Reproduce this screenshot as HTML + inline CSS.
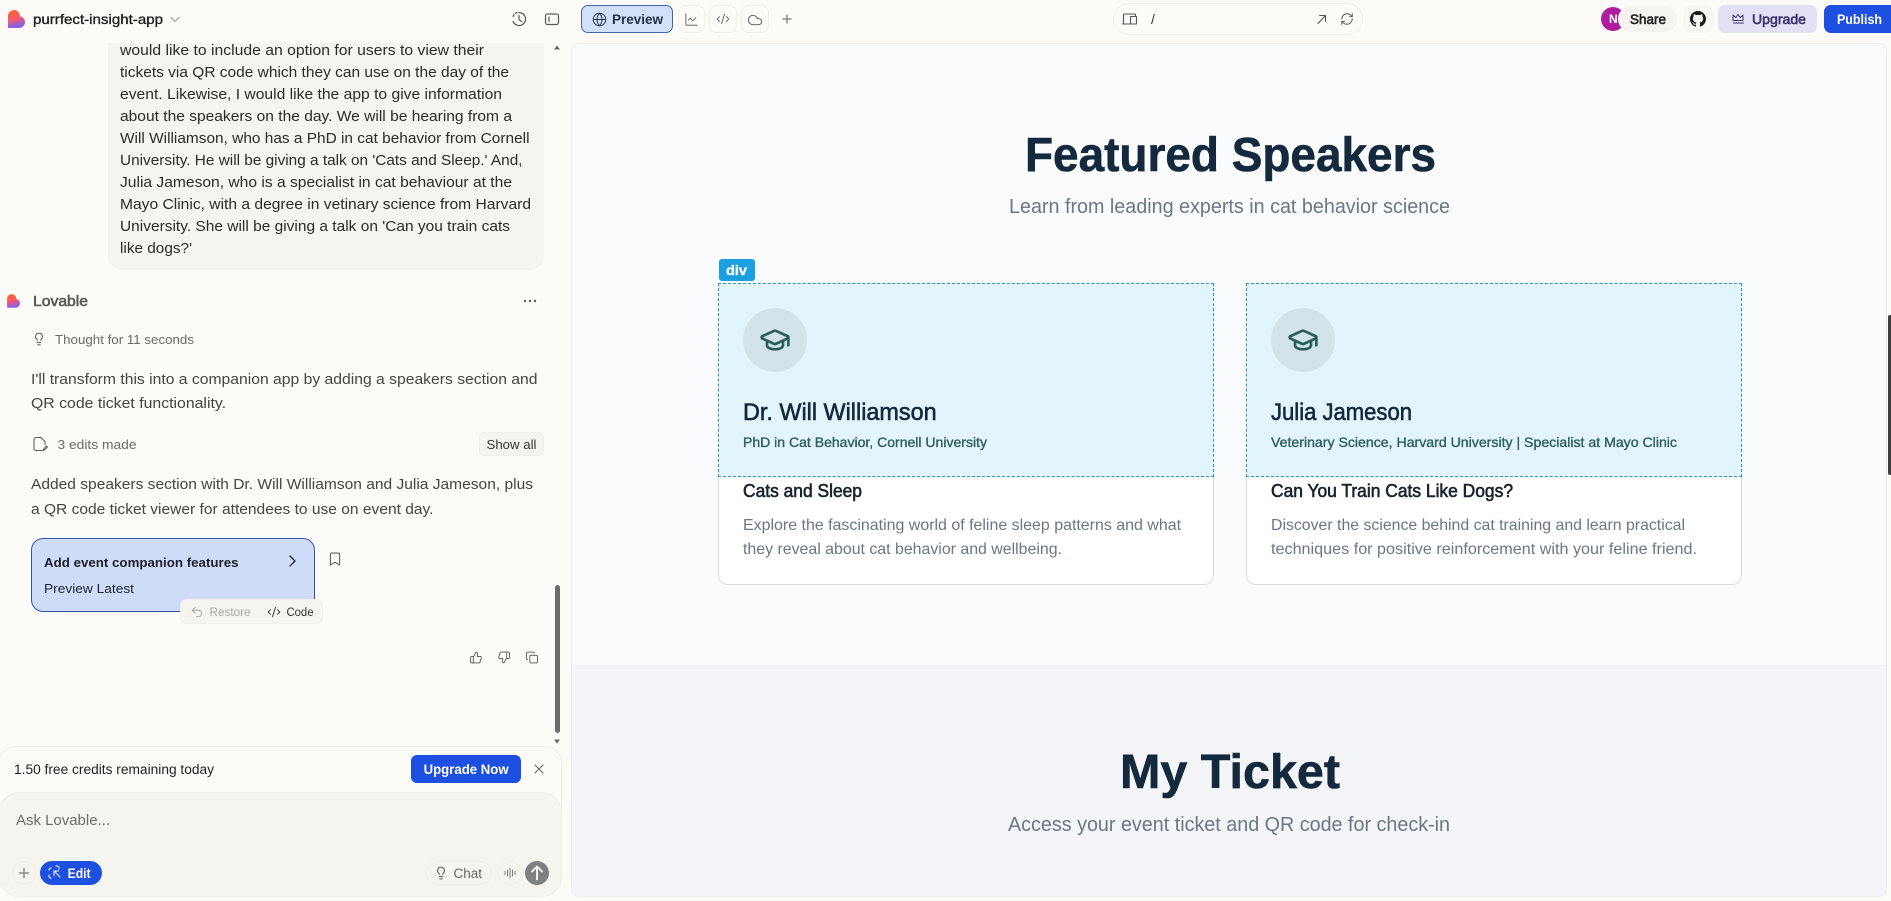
<!DOCTYPE html>
<html lang="en">
<head>
<meta charset="utf-8">
<title>purrfect-insight-app – Lovable</title>
<style>
html,body{margin:0;padding:0;width:1891px;height:901px;overflow:hidden;background:#fcfbf8;font-family:"Liberation Sans",sans-serif}
.b{position:absolute;box-sizing:border-box}
svg.o{position:absolute;left:0;top:0;width:1891px;height:901px}
svg.o text{font-family:"Liberation Sans",sans-serif}
.m{stroke-width:.35px;stroke:currentColor}
.h{stroke-width:.6px;stroke:currentColor}
.s{fill:none;stroke:currentColor;stroke-linecap:round;stroke-linejoin:round}
</style>
</head>
<body>
<!-- chat panel -->
<div class="b" style="left:108px;top:43px;width:436px;height:227px;background:#f6f4ef;border-radius:0 0 14px 14px"></div>
<div class="b" style="left:479px;top:432px;width:65px;height:24px;background:#f6f4ef;border:1px solid #eeede8;border-radius:6px"></div>
<div class="b" style="left:31px;top:538px;width:284px;height:74px;background:#cfdcf8;border:1.5px solid #2f56a8;border-radius:12px"></div>
<div class="b" style="left:180px;top:599px;width:143px;height:25px;background:#f6f4ef;border:1px solid #f0efea;border-radius:7px"></div>
<div class="b" style="left:555px;top:585px;width:5px;height:148px;background:#6b6b6b;border-radius:3px"></div>
<div class="b" style="left:-1px;top:746px;width:563px;height:70px;background:#fcfbf8;border:1px solid #efeee9;border-radius:16px 16px 0 0"></div>
<div class="b" style="left:411px;top:755px;width:110px;height:28px;background:#1d4fe0;border-radius:6px"></div>
<div class="b" style="left:-1px;top:792px;width:563px;height:105px;background:#f6f4ef;border:1px solid #efeee9;border-radius:20px"></div>
<div class="b" style="left:12px;top:861px;width:24px;height:24px;border:1px solid #efeee9;border-radius:50%"></div>
<div class="b" style="left:40px;top:861px;width:62px;height:24px;background:#1d4fe0;border-radius:12px"></div>
<div class="b" style="left:426px;top:861px;width:66px;height:24px;border:1px solid #efeee9;border-radius:12px"></div>
<div class="b" style="left:498px;top:861px;width:24px;height:24px;border:1px solid #efeee9;border-radius:50%"></div>
<div class="b" style="left:525px;top:861px;width:24px;height:24px;background:#808080;border-radius:50%"></div>

<!-- top bar -->
<div class="b" style="left:581px;top:5px;width:92px;height:28px;background:#d2e0f7;border:1px solid #3f68ae;border-radius:7px"></div>
<div class="b" style="left:678px;top:5px;width:27px;height:28px;border:1px solid #f0efea;border-radius:8px"></div>
<div class="b" style="left:709px;top:5px;width:28px;height:28px;border:1px solid #f0efea;border-radius:8px"></div>
<div class="b" style="left:741px;top:5px;width:28px;height:28px;border:1px solid #f0efea;border-radius:8px"></div>
<div class="b" style="left:1113px;top:3px;width:250px;height:32px;border:1px solid #f0efea;border-radius:16px"></div>
<div class="b" style="left:1601px;top:7px;width:24px;height:24px;background:#b01ca0;border-radius:50%;color:#fff;font-size:12px;font-weight:bold;line-height:25px;padding-left:8px">N</div>
<div class="b" style="left:1618px;top:6px;width:59px;height:26px;background:#f6f4ef;border-radius:13px"></div>
<div class="b" style="left:1683px;top:5px;width:30px;height:28px;background:#f8f6f1;border-radius:8px"></div>
<div class="b" style="left:1718px;top:5px;width:99px;height:28px;background:#e2e0f5;border-radius:7px"></div>
<div class="b" style="left:1824px;top:5px;width:67px;height:28px;background:#1d4fe0;border-radius:7px 0 0 7px"></div>

<!-- preview pane -->
<div class="b" style="left:571px;top:43px;width:1316px;height:854px;background:#fafbfd;border:1px solid #eeeeec;border-radius:8px;overflow:hidden">
  <div class="b" style="left:0;top:621px;width:1315px;height:233px;background:#f3f5f8"></div>
</div>
<div class="b" style="left:718px;top:283px;width:496px;height:302px;background:#fff;border:1px solid #d9dce1;border-radius:10px"></div>
<div class="b" style="left:1246px;top:283px;width:496px;height:302px;background:#fff;border:1px solid #d9dce1;border-radius:10px"></div>
<div class="b" style="left:718px;top:283px;width:496px;height:194px;background:#e2f5fd;border:1px dashed #3a93ad"></div>
<div class="b" style="left:1246px;top:283px;width:496px;height:194px;background:#e2f5fd;border:1px dashed #3a93ad"></div>
<div class="b" style="left:743px;top:308px;width:64px;height:64px;background:#d2e4ea;border-radius:50%"></div>
<div class="b" style="left:1271px;top:308px;width:64px;height:64px;background:#d2e4ea;border-radius:50%"></div>
<div class="b" style="left:719px;top:259px;width:36px;height:22px;background:#1a9fe0;border-radius:3px"></div>
<div class="b" style="left:1888px;top:315px;width:3px;height:160px;background:#3f3f3f;border-radius:2px 0 0 2px"></div>

<svg class="o" viewBox="0 0 1891 901">
<defs>
<linearGradient id="lg" x1="0" y1="0" x2="0.25" y2="1"><stop offset="0" stop-color="#ff6a1f"/><stop offset=".55" stop-color="#f8566b"/><stop offset="1" stop-color="#8263ee"/></linearGradient>
<symbol id="cap" viewBox="0 0 24 24"><path d="M21.42 10.922a1 1 0 0 0-.019-1.838L12.83 5.18a2 2 0 0 0-1.66 0L2.6 9.08a1 1 0 0 0 0 1.832l8.57 3.908a2 2 0 0 0 1.66 0z"/><path d="M22 10v6"/><path d="M6 12.5V16a6 3 0 0 0 12 0v-3.5"/></symbol>
<symbol id="up" viewBox="0 0 24 24"><path d="M7 10v12"/><path d="M15 5.88 14 10h5.83a2 2 0 0 1 1.92 2.56l-2.33 8A2 2 0 0 1 17.5 22H4a2 2 0 0 1-2-2v-8a2 2 0 0 1 2-2h2.76a2 2 0 0 0 1.79-1.11L12 2a3.13 3.13 0 0 1 3 3.88Z"/></symbol>
<symbol id="down" viewBox="0 0 24 24"><path d="M17 14V2"/><path d="M9 18.12 10 14H4.17a2 2 0 0 1-1.92-2.56l2.33-8A2 2 0 0 1 6.5 2H20a2 2 0 0 1 2 2v8a2 2 0 0 1-2 2h-2.76a2 2 0 0 0-1.79 1.11L12 22a3.13 3.13 0 0 1-3-3.88Z"/></symbol>
<symbol id="copy" viewBox="0 0 24 24"><rect x="8" y="8" width="14" height="14" rx="2"/><path d="M4 16c-1.1 0-2-.9-2-2V4c0-1.1.9-2 2-2h10c1.1 0 2 .9 2 2"/></symbol>
<symbol id="bulb" viewBox="0 0 24 24"><path d="M15 14c.2-1 .7-1.7 1.5-2.5 1-.9 1.5-2.2 1.5-3.5A6 6 0 0 0 6 8c0 1 .2 2.2 1.5 3.5.7.7 1.3 1.5 1.5 2.5"/><path d="M9 18h6"/><path d="M10 22h4"/></symbol>
<symbol id="globe" viewBox="0 0 24 24"><circle cx="12" cy="12" r="10"/><path d="M12 2a14.5 14.5 0 0 0 0 20 14.5 14.5 0 0 0 0-20"/><path d="M2 12h20"/></symbol>
<symbol id="chart" viewBox="0 0 24 24"><path d="M3 3v16a2 2 0 0 0 2 2h16"/><path d="m19 9-5 5-4-4-3 3"/></symbol>
<symbol id="code" viewBox="0 0 24 24"><path d="m18 16 4-4-4-4"/><path d="m6 8-4 4 4 4"/><path d="m14.5 4-5 16"/></symbol>
<symbol id="cloud" viewBox="0 0 24 24"><path d="M17.5 19H9a7 7 0 1 1 6.71-9h1.79a4.5 4.5 0 1 1 0 9Z"/></symbol>
<symbol id="mark" viewBox="0 0 24 24"><path d="m19 21-7-4-7 4V5a2 2 0 0 1 2-2h10a2 2 0 0 1 2 2v16z"/></symbol>
<symbol id="undo" viewBox="0 0 24 24"><path d="M9 14 4 9l5-5"/><path d="M4 9h10.5a5.5 5.5 0 0 1 5.5 5.5 5.5 5.5 0 0 1-5.5 5.5H11"/></symbol>
<symbol id="refresh" viewBox="0 0 24 24"><path d="M3 12a9 9 0 0 1 9-9 9.75 9.75 0 0 1 6.74 2.74L21 8"/><path d="M21 3v5h-5"/><path d="M21 12a9 9 0 0 1-9 9 9.75 9.75 0 0 1-6.74-2.74L3 16"/><path d="M8 16H3v5"/></symbol>
</defs>

<!-- logos -->
<path fill="url(#lg)" d="M8 28V16a6 6 0 0 1 11.800-1.500c.2.800.2 1.500.2 2a5.500 5.500 0 0 1 5 5.500 6 6 0 0 1-6 6Z"/>
<path fill="url(#lg)" transform="translate(1 286.500) scale(.76)" d="M8 28V16a6 6 0 0 1 11.800-1.500c.2.800.2 1.500.2 2a5.500 5.500 0 0 1 5 5.500 6 6 0 0 1-6 6Z"/>

<!-- header left -->
<text class="m" x="33" y="24" font-size="14" fill="#1f1f1d" textLength="130" lengthAdjust="spacingAndGlyphs" style="color:#1f1f1d">purrfect-insight-app</text>
<path class="s" style="color:#9a9a96" stroke-width="1.100" d="M171 17.500l4 4 4-4"/>
<g class="s" style="color:#5c5c59" stroke-width="1.200">
<path stroke-dasharray="2 2" d="M513 16.500a6.500 6.500 0 0 1 4-4"/><path d="M519 12.500a6.500 6.500 0 1 1-6 9"/><path d="M519 15.500v4l2.500 2"/>
<rect x="545.500" y="14" width="13" height="10.500" rx="2"/><path d="M549 17v4.500"/>
</g>
<path fill="#666" d="M557 45.500l3 4h-6z"/><path fill="#666" d="M557 743.500l3-4h-6z"/>

<!-- user bubble -->
<g fill="#2b2b29" font-size="14.500">
<text x="120" y="55" textLength="364" lengthAdjust="spacingAndGlyphs">would like to include an option for users to view their</text>
<text x="120" y="77" textLength="389" lengthAdjust="spacingAndGlyphs">tickets via QR code which they can use on the day of the</text>
<text x="120" y="99" textLength="382" lengthAdjust="spacingAndGlyphs">event. Likewise, I would like the app to give information</text>
<text x="120" y="121" textLength="392" lengthAdjust="spacingAndGlyphs">about the speakers on the day. We will be hearing from a</text>
<text x="120" y="143" textLength="409.500" lengthAdjust="spacingAndGlyphs">Will Williamson, who has a PhD in cat behavior from Cornell</text>
<text x="120" y="165" textLength="402.500" lengthAdjust="spacingAndGlyphs">University. He will be giving a talk on 'Cats and Sleep.' And,</text>
<text x="120" y="187" textLength="392" lengthAdjust="spacingAndGlyphs">Julia Jameson, who is a specialist in cat behaviour at the</text>
<text x="120" y="209" textLength="411" lengthAdjust="spacingAndGlyphs">Mayo Clinic, with a degree in vetinary science from Harvard</text>
<text x="120" y="231" textLength="390" lengthAdjust="spacingAndGlyphs">University. She will be giving a talk on 'Can you train cats</text>
<text x="120" y="253" textLength="72" lengthAdjust="spacingAndGlyphs">like dogs?'</text>
</g>

<!-- assistant -->
<text class="h" x="33" y="306" font-size="14.500" fill="#5a5a57" style="color:#5a5a57" textLength="55" lengthAdjust="spacingAndGlyphs">Lovable</text>
<g fill="#555"><circle cx="525" cy="301" r="1.200"/><circle cx="530" cy="301" r="1.200"/><circle cx="535" cy="301" r="1.200"/></g>
<use href="#bulb" x="32" y="332" width="14" height="14" class="s" style="color:#6b6b68" stroke-width="2"/>
<text x="55" y="344" font-size="13" fill="#6b6b68" textLength="139" lengthAdjust="spacingAndGlyphs">Thought for 11 seconds</text>
<g fill="#454542" font-size="14.500">
<text x="31" y="384" textLength="506.500" lengthAdjust="spacingAndGlyphs">I'll transform this into a companion app by adding a speakers section and</text>
<text x="31" y="408" textLength="195" lengthAdjust="spacingAndGlyphs">QR code ticket functionality.</text>
<text x="31" y="489" textLength="502" lengthAdjust="spacingAndGlyphs">Added speakers section with Dr. Will Williamson and Julia Jameson, plus</text>
<text x="31" y="514" textLength="402.500" lengthAdjust="spacingAndGlyphs">a QR code ticket viewer for attendees to use on event day.</text>
</g>
<g class="s" style="color:#5f5f5c" stroke-width="1.100"><path d="M42 450.500h-6a2 2 0 0 1-2-2v-9a2 2 0 0 1 2-2h5l4 4v3"/><path d="M46.500 446l-2.500 2.500-1 2 2-1 2.500-2.500z"/></g>
<text x="57.500" y="449" font-size="13" fill="#6b6b68" textLength="79" lengthAdjust="spacingAndGlyphs">3 edits made</text>
<text x="486.500" y="449" font-size="13" fill="#333" textLength="50" lengthAdjust="spacingAndGlyphs">Show all</text>

<!-- version card -->
<text x="44" y="567" font-size="13" font-weight="bold" fill="#1b1f2a" textLength="194.500" lengthAdjust="spacingAndGlyphs">Add event companion features</text>
<path class="s" style="color:#1b1f2a" stroke-width="1.300" d="M290 556l5 5-5 5"/>
<text x="44" y="593" font-size="13" fill="#1f2430" textLength="90" lengthAdjust="spacingAndGlyphs">Preview Latest</text>
<use href="#mark" x="327" y="551" width="16" height="16" class="s" style="color:#55554f" stroke-width="1.500"/>
<use href="#undo" x="190" y="605" width="14" height="14" class="s" style="color:#a3a3a0" stroke-width="1.600"/>
<text x="209.500" y="616" font-size="11.500" fill="#a8a8a4" textLength="41" lengthAdjust="spacingAndGlyphs">Restore</text>
<use href="#code" x="267" y="605" width="14" height="14" class="s" style="color:#333" stroke-width="1.600"/>
<text x="286.500" y="616" font-size="11.500" fill="#333" textLength="27" lengthAdjust="spacingAndGlyphs">Code</text>
<use href="#up" x="469.500" y="651" width="13" height="13" class="s" style="color:#55554f" stroke-width="1.600"/>
<use href="#down" x="497.500" y="651" width="13" height="13" class="s" style="color:#55554f" stroke-width="1.600"/>
<use href="#copy" x="525.500" y="651" width="13" height="13" class="s" style="color:#55554f" stroke-width="1.600"/>

<!-- composer -->
<text x="14" y="774" font-size="13.500" fill="#222" textLength="200" lengthAdjust="spacingAndGlyphs">1.50 free credits remaining today</text>
<text x="423.600" y="774" font-size="13.500" font-weight="bold" fill="#fff" textLength="85" lengthAdjust="spacingAndGlyphs">Upgrade Now</text>
<path class="s" style="color:#666" stroke-width="1.100" d="M535 765l8 8M543 765l-8 8"/>
<text x="16" y="825" font-size="15" fill="#6d6c68" textLength="94" lengthAdjust="spacingAndGlyphs">Ask Lovable...</text>
<path class="s" style="color:#777" stroke-width="1.200" d="M19.500 873h9M24 868.500v9"/>
<g class="s" style="color:#d8e2fb" stroke-width="1.200"><path d="M51 868a2 2 0 0 0-2 2M49 875v1a2 2 0 0 0 2 2M56 866h1a2 2 0 0 1 2 2v1"/><path d="M54 871l6 6M54 871v4.500M54 871h4.500"/></g>
<text x="67.600" y="878" font-size="13.500" font-weight="bold" fill="#fff" textLength="23" lengthAdjust="spacingAndGlyphs">Edit</text>
<use href="#bulb" x="434" y="866" width="14" height="14" class="s" style="color:#666" stroke-width="2"/>
<text x="453.500" y="878" font-size="13.500" fill="#666" textLength="28.500" lengthAdjust="spacingAndGlyphs">Chat</text>
<path class="s" style="color:#808080" stroke-width="1.100" d="M505 871.500v3M507.500 870v6M510 868.500v9M512.500 870v6M515 871.500v3"/>
<path class="s" style="color:#fff" stroke-width="1.800" d="M537 879.500v-13M532 871.500l5-5 5 5"/>

<!-- top bar content -->
<use href="#globe" x="592" y="12" width="15" height="15" class="s" style="color:#2b3a55" stroke-width="1.600"/>
<text x="612" y="24" font-size="13.500" font-weight="bold" fill="#24304a" textLength="51" lengthAdjust="spacingAndGlyphs">Preview</text>
<use href="#chart" x="684" y="12" width="15" height="15" class="s" style="color:#555" stroke-width="1.400"/>
<use href="#code" x="716" y="12" width="14" height="14" class="s" style="color:#555" stroke-width="1.500"/>
<use href="#cloud" x="747" y="12" width="16" height="16" class="s" style="color:#555" stroke-width="1.400"/>
<path class="s" style="color:#777" stroke-width="1.200" d="M783 19h8M787 15v8"/>
<g class="s" style="color:#555" stroke-width="1.100"><path d="M1123.500 24v-9a1 1 0 0 1 1-1h10a1 1 0 0 1 1 1v1M1122.500 24h7M1130.500 16.500h6v7.500h-6z"/></g>
<text x="1151" y="24" font-size="14" fill="#333">/</text>
<path class="s" style="color:#555" stroke-width="1.100" d="M1318 23.500l7.500-8M1319.500 15.500h6v6"/>
<use href="#refresh" x="1340" y="12" width="14" height="14" class="s" style="color:#555" stroke-width="1.600"/>
<text class="h" x="1630" y="24" font-size="13.500" fill="#222" style="color:#222" textLength="36" lengthAdjust="spacingAndGlyphs">Share</text>
<svg x="1690" y="11" width="16" height="16" viewBox="0 0 16 16"><path fill="#1a1a1a" d="M8 0C3.580 0 0 3.580 0 8c0 3.540 2.290 6.530 5.470 7.590.4.070.55-.17.55-.38 0-.19-.01-.82-.01-1.490-2.010.37-2.530-.49-2.690-.94-.09-.23-.48-.94-.82-1.130-.28-.15-.68-.52-.01-.53.63-.01 1.080.58 1.230.82.72 1.210 1.870.87 2.330.66.07-.52.28-.87.51-1.070-1.780-.2-3.640-.89-3.640-3.950 0-.87.31-1.590.82-2.150-.08-.2-.36-1.020.08-2.120 0 0 .67-.21 2.200.82.64-.18 1.320-.27 2-.27.68 0 1.360.09 2 .27 1.530-1.040 2.200-.82 2.200-.82.44 1.100.16 1.920.08 2.120.51.56.82 1.270.82 2.150 0 3.070-1.870 3.750-3.650 3.950.29.25.54.73.54 1.480 0 1.070-.01 1.930-.01 2.200 0 .21.15.46.55.38A8.013 8.013 0 0016 8c0-4.420-3.580-8-8-8z"/></svg>
<g class="s" style="color:#3a3470" stroke-width="1"><path d="M1733 15l2.800 2.500 2.200-3 2.200 3 2.800-2.500v5.500h-10zM1733.500 23h10"/></g>
<text class="h" x="1752" y="24" font-size="13.500" fill="#3a3470" style="color:#3a3470" textLength="54" lengthAdjust="spacingAndGlyphs">Upgrade</text>
<text x="1837" y="24" font-size="13.500" font-weight="bold" fill="#fff" textLength="45" lengthAdjust="spacingAndGlyphs">Publish</text>

<!-- preview content -->
<text class="h" x="1025" y="171" font-size="48" font-weight="bold" fill="#13293d" style="color:#13293d" textLength="411" lengthAdjust="spacingAndGlyphs">Featured Speakers</text>
<text x="1009" y="213" font-size="20" fill="#6b7686" textLength="441" lengthAdjust="spacingAndGlyphs">Learn from leading experts in cat behavior science</text>
<text class="m" x="726" y="275" font-size="14" font-weight="bold" fill="#fff" style="color:#fff" textLength="21" lengthAdjust="spacingAndGlyphs">div</text>

<use href="#cap" x="759" y="324" width="32" height="32" class="s" style="color:#2a5e5a" stroke-width="2"/>
<text class="h" x="743" y="420" font-size="24" fill="#13293d" style="color:#13293d" textLength="193.600" lengthAdjust="spacingAndGlyphs">Dr. Will Williamson</text>
<text class="m" x="743" y="447" font-size="14" fill="#2f5e5f" style="color:#2f5e5f" textLength="244" lengthAdjust="spacingAndGlyphs">PhD in Cat Behavior, Cornell University</text>
<text class="h" x="743" y="497" font-size="18" fill="#16232f" style="color:#16232f" textLength="119" lengthAdjust="spacingAndGlyphs">Cats and Sleep</text>
<text x="743" y="530" font-size="16" fill="#6b7686" textLength="438" lengthAdjust="spacingAndGlyphs">Explore the fascinating world of feline sleep patterns and what</text>
<text x="743" y="554" font-size="16" fill="#6b7686" textLength="319" lengthAdjust="spacingAndGlyphs">they reveal about cat behavior and wellbeing.</text>

<use href="#cap" x="1287" y="324" width="32" height="32" class="s" style="color:#2a5e5a" stroke-width="2"/>
<text class="h" x="1271" y="420" font-size="24" fill="#13293d" style="color:#13293d" textLength="141" lengthAdjust="spacingAndGlyphs">Julia Jameson</text>
<text class="m" x="1271" y="447" font-size="14" fill="#2f5e5f" style="color:#2f5e5f" textLength="406" lengthAdjust="spacingAndGlyphs">Veterinary Science, Harvard University | Specialist at Mayo Clinic</text>
<text class="h" x="1271" y="497" font-size="18" fill="#16232f" style="color:#16232f" textLength="242" lengthAdjust="spacingAndGlyphs">Can You Train Cats Like Dogs?</text>
<text x="1271" y="530" font-size="16" fill="#6b7686" textLength="414" lengthAdjust="spacingAndGlyphs">Discover the science behind cat training and learn practical</text>
<text x="1271" y="554" font-size="16" fill="#6b7686" textLength="426" lengthAdjust="spacingAndGlyphs">techniques for positive reinforcement with your feline friend.</text>

<text class="h" x="1120" y="788" font-size="48" font-weight="bold" fill="#13293d" style="color:#13293d" textLength="220" lengthAdjust="spacingAndGlyphs">My Ticket</text>
<text x="1008" y="831" font-size="20" fill="#6b7686" textLength="442" lengthAdjust="spacingAndGlyphs">Access your event ticket and QR code for check-in</text>
</svg>
</body>
</html>
